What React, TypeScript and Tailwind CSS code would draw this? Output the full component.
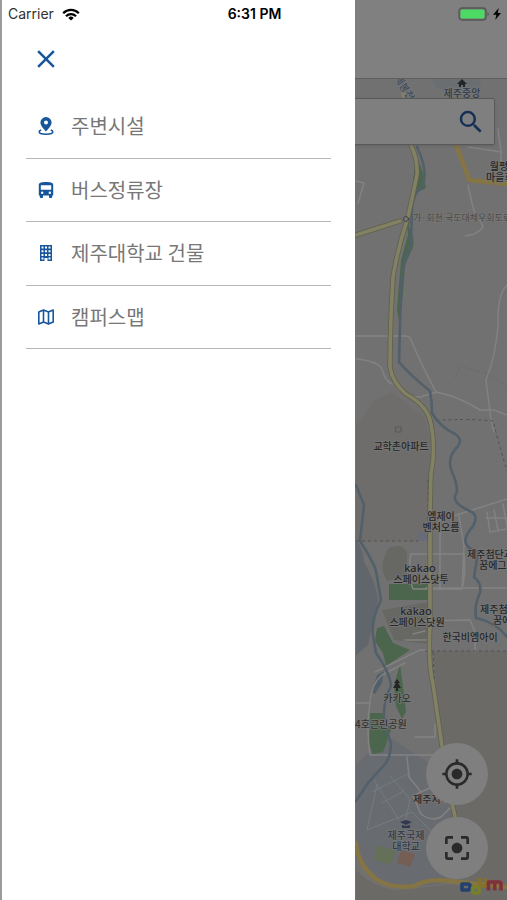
import React from "react";
import { MdSearch, MdClose, MdGpsFixed, MdCenterFocusStrong } from "react-icons/md";

function PlaceIcon() {
  return (
    <svg viewBox="0 0 20 20" className="size-5" fill="none" aria-hidden="true">
      <path
        fillRule="evenodd"
        fill="currentColor"
        d="M10 1a5.600 5.600 0 0 0-5.600 5.600C4.400 10.200 10 15.500 10 15.500s5.600-5.300 5.600-8.900A5.600 5.600 0 0 0 10 1Zm0 3.600a2 2 0 1 1 0 4 2 2 0 0 1 0-4Z"
      />
      <path d="M5.200 14c-1.300.5-2 1.100-2 1.700 0 1.400 3 2.500 6.800 2.500s6.800-1.100 6.800-2.500c0-.6-.7-1.200-2-1.700" stroke="currentColor" strokeWidth="1.600" />
    </svg>
  );
}

function BusIcon() {
  return (
    <svg viewBox="0 0 20 20" className="size-5" fill="currentColor" aria-hidden="true">
      <path
        fillRule="evenodd"
        d="M2.800 5c0-2.200 2.500-3 7.200-3s7.200.8 7.200 3v10.500h-1V17c0 .6-.4 1-1 1h-1.200c-.6 0-1-.4-1-1v-1.500H7V17c0 .6-.4 1-1 1H4.800c-.6 0-1-.4-1-1v-1.500h-1V5Zm2 .3v4.500h10.400V5.300H4.800Zm1.400 6.200a1.200 1.200 0 1 0 0 2.400 1.200 1.200 0 0 0 0-2.400Zm7.600 0a1.200 1.200 0 1 0 0 2.400 1.200 1.200 0 0 0 0-2.400Z"
      />
    </svg>
  );
}

function BuildingIcon() {
  return (
    <svg viewBox="0 0 20 20" className="size-5" fill="currentColor" aria-hidden="true">
      <path
        fillRule="evenodd"
        d="M4 2h12v16h-4.500v-3h-3v3H4V2Zm1.500 1.500v2h2v-2h-2Zm3.500 0v2h2v-2H9Zm3.500 0v2h2v-2h-2Zm-7 3.700v2h2v-2h-2Zm3.500 0v2h2v-2H9Zm3.500 0v2h2v-2h-2Zm-7 3.700v2h2v-2h-2Zm3.500 0v2h2v-2H9Zm3.500 0v2h2v-2h-2Zm-7 3.700v2h2v-2h-2Zm7 0v2h2v-2h-2Z"
      />
    </svg>
  );
}

function CampusMapIcon() {
  return (
    <svg viewBox="0 0 20 20" className="size-5" fill="none" stroke="currentColor" strokeWidth="1.600" strokeLinejoin="round" aria-hidden="true">
      <path d="M2.800 5 7.500 3l5 2 4.700-2v12l-4.700 2-5-2-4.700 2V5ZM7.500 3v12M12.500 5v12" />
    </svg>
  );
}

const menu = [
  { label: "주변시설", Icon: PlaceIcon },
  { label: "버스정류장", Icon: BusIcon },
  { label: "제주대학교 건물", Icon: BuildingIcon },
  { label: "캠퍼스맵", Icon: CampusMapIcon },
];

function StatusBar() {
  return (
    <div className="absolute inset-x-0 top-0 z-30 grid h-7 grid-cols-3 items-center pr-[6px] pl-2 font-[Inter,'Liberation_Sans',sans-serif] text-sm text-[#303030]">
      <div className="flex items-center gap-2">
        <span>Carrier</span>
        <svg viewBox="0 0 18 13" className="h-[13px] w-[18px]" fill="none" stroke="#000" strokeWidth="2.300" aria-hidden="true">
          <path d="M1.200 5.200a11 11 0 0 1 15.600 0M4 8.200a7 7 0 0 1 10 0" />
          <path d="M9 12.500 6.300 9.900a3.900 3.900 0 0 1 5.400 0Z" fill="#000" stroke="none" />
        </svg>
      </div>
      <span className="text-center font-semibold text-black">6:31 PM</span>
      <div className="flex items-center justify-end gap-1">
        <svg viewBox="0 0 31 14" className="h-[14px] w-[31px]" aria-hidden="true">
          <rect x="1" y="1" width="27" height="12" rx="3" fill="#747474" stroke="#555" strokeWidth="1.300" />
          <rect x="2.500" y="2.500" width="24" height="9" rx="1.500" fill="#4cd964" />
          <path d="M29.500 5v4q1.300-.6 1.300-2t-1.300-2Z" fill="#555" />
        </svg>
        <svg viewBox="0 0 8 12" className="h-3 w-2" aria-hidden="true">
          <path d="M5.800 0 0 6.700h3.400L2.200 12 8 5H4.600L5.800 0Z" fill="#000" />
        </svg>
      </div>
    </div>
  );
}

function MapCanvas() {
  return (
    <svg viewBox="0 79 507 821" preserveAspectRatio="xMaxYMin slice" className="absolute inset-0 size-full" fill="none" strokeLinecap="round" strokeLinejoin="round" role="img" aria-label="지도">
      <rect y="79" width="507" height="821" fill="#727171" />
      <path d="M356 425 375 400 392 392 425 418 430 440 429 541H356Z" fill="#6f6d6b" />
      <path d="M433 651h74v249H462L442 745Z" fill="#6b6a66" />
      <path d="M356 870q20 20 45 20l50-6 56 10v6H356Z" fill="#6b6a66" />
      <path d="M356 765l15-15 20-12 45 30 20 60-10 55-40 5-28-5-22-25Z" fill="#686b70" />
      <path d="M356 540q8 10 8 22 12 20 14 38l-10 45-12 10Z" fill="#60666b" />
      <ellipse cx="457" cy="82" rx="24" ry="10" fill="#6a6e71" />

      {/* Parks */}
      <g fill="#4c664d">
        <path d="M410 145q8 12 13 28l3 15-12 6-5 33q6 10 4 20l-8 18-1 15-2 25-3 15-2-10 4-50 7-25-2-20 6-25 3-25Z" />
        <path d="M389 584h40v16h-40Z" />
        <path d="m377 628 7-2 9 17 17 7-24 16-3-13-8-12Z" />
        <path d="m400 664 4 30 2 18-4 7-6-13-2-20Z" />
        <path d="M370 713h12l9 17-8 22-10 2-4-10Z" />
      </g>
      <path d="M389 548q15-6 18 5v23l-20 5q-10-16 2-33ZM382 610l47-8v42l-35-4Z" fill="#676863" />
      <path d="M418 532h12v9h-12Z" fill="#686b78" />
      <path d="m376 845 20 6-5 14-17-6Z" fill="#647057" />
      <path d="m401 850 14 4-5 13-13-4Z" fill="#755f55" />
      <path d="m372 692 5-17 7-4-2 12-7 11Z" fill="#52606b" />

      {/* Minor roads */}
      <g stroke="#828282" strokeWidth="1.500">
        <path d="M356 336h50q4 0 6 6 8 20 24 50 22 4 44 18h14l13 5M410 397h10l17-5M356 359q22 2 26 10 3 12 10 15" />
        <path d="M507 285q-10 10-9 40-2 30-12 55l5 40 3 12M468 185q4 20 7 28 6 8 8 14-6 8-18 9M468 147l33 5M498 129l3 22v17M356 181l8 2-6 20" />
        <path d="m450 517 57-18M487 512l3 20 17-3M494 510l4 20M503 504l4 23M486 518h21M459 516l5 30-2 43M440 516v74M411 554h53q2 20-2 35H413q-6-15-2-35ZM426 588h81M420 621l50-1 5 12v20M405 640h22M413 634l12-3" />
        <path d="m375 672 45-22h10M370 755q-4-25 0-54 2-18 12-26l23-12M370 755h70M407 757l2 20 12 15 20-9M421 792l-8 4 8 18q10 8 20 3l12-12M356 703h14M415 737h20V724" />
        <path d="m367 830 45-18 25 25M374 780l25 40M390 776l20 23-5 25M382 803l22-12M372 792l38-19M367 830l10-45" strokeWidth="0.900" stroke="#777e82" />
      </g>

      {/* District borders */}
      <g stroke="#505050" strokeWidth="1" strokeDasharray="3 3" strokeLinecap="butt">
        <path d="M430 421q35-3 63 0 8 30 14 50M356 541h62M425 651h82M428 480v60M433 652l3 60" />
        <path d="m455 378 5-12 28 8 19 12" stroke="#646464" strokeDasharray="1 2" />
      </g>

      {/* Streams */}
      <g stroke="#52606b" strokeWidth="2.600">
        <path d="M417 147q12 25 5 40-8 5-10 20l-1 38q-8 16-10 42l-2 75q12 14 31 29 2 10 2 22 8 14 23 21 8 5 3 12-12 12-6 26 8 18 3 24-2 8 17 16 8 6-2 18-12 16 8 22-2 14-4 25 8 6 6 16-6 12-4 25 20 4 31 19" />
        <path d="m356 485 8 20-4 36q14 22 16 30l5 29q-10 20-8 35l3 18q14 20 15 33-10 20-6 40l6 17q0 12-5 20l-18 20-12 18" />
      </g>

      {/* Main roads */}
      <g stroke="#5f5f4e" strokeWidth="5.200">
        <path d="M411 145q7 15 6 30l-9 42q-10 30-15 60-3 50-3 90 2 15 16 27 22 12 25 30 5 25 0 50l-1 40v110q-2 40 3 60l9 62q6 40 14 75M356 235l44-14" />
      </g>
      <g stroke="#838164" strokeWidth="3.600">
        <path d="M401 79l3 20M411 145q7 15 6 30l-9 42q-10 30-15 60-3 50-3 90 2 15 16 27 22 12 25 30 5 25 0 50l-1 40v110q-2 40 3 60l9 62q6 40 14 75M356 235l44-14" />
      </g>
      <path d="m456 145 6 15 7 20 38 4M356 843q2 22 20 36 15 10 38 7 15-8 35-5l58 6" stroke="#857444" strokeWidth="4.500" />
      <circle cx="406" cy="219" r="2.500" stroke="#444" strokeWidth="1" fill="#777" />

      {/* Place symbols */}
      <g fill="#242424">
        <path d="m462 79 5 5h-2v3h-2v-2h-2v2h-2v-3h-2Z" />
        <path d="m397 679 3 4h-2l3 5h-3v3h-2v-3h-3l3-5h-2Z" />
        <path d="m406 820 6 2-6 3-6-3ZM402 825l4 1 4-1v3h-8Z" fill="#30394d" />
      </g>
      <path d="M396 427h5v5h-5Z" stroke="#55504a" strokeWidth="0.800" />

      {/* Labels */}
      <g className="font-['Noto_Sans_CJK_KR',sans-serif] text-[10px] font-medium" fill="#262626" stroke="#787878" strokeWidth="1.500" textAnchor="middle" style={{ paintOrder: "stroke" }}>
        <text x="462" y="97" fill="#303948">제주중앙</text>
        <text x="404" y="91" fill="#3d4b5c" transform="rotate(58 404 88)">제봉천</text>
        <text x="499" y="170">월평</text>
        <text x="486" y="181" textAnchor="start">마을회관</text>
        <text x="413" y="221" textAnchor="start" fill="#484848" className="text-[9px] font-normal">가·회천 국도대체우회도로(20)</text>
        <text x="401" y="450">교학촌아파트</text>
        <text x="441" y="520">엠제이</text>
        <text x="441" y="531">벤처오름</text>
        <text x="467" y="558" textAnchor="start">제주첨단과학</text>
        <text x="479" y="569" textAnchor="start">꿈에그린</text>
        <text x="420" y="572" className="font-['Noto_Sans',sans-serif] text-[11px]">kakao</text>
        <text x="421" y="583">스페이스닷투</text>
        <text x="416" y="615" className="font-['Noto_Sans',sans-serif] text-[11px]">kakao</text>
        <text x="417" y="626">스페이스닷원</text>
        <text x="480" y="613" textAnchor="start">제주첨단</text>
        <text x="493" y="624" textAnchor="start">꿈에</text>
        <text x="470" y="641">한국비엠아이</text>
        <text x="397" y="702" fill="#303530">카카오</text>
        <text x="355" y="728" textAnchor="start" fill="#333">4호근린공원</text>
        <text x="413" y="803" textAnchor="start">제주지식</text>
        <text x="406" y="839" fill="#303948">제주국제</text>
        <text x="406" y="850" fill="#303948">대학교</text>
      </g>
    </svg>
  );
}

function DaumLogo() {
  return (
    <svg viewBox="0 0 44 20" className="absolute right-1 bottom-1 h-5 w-11" fill="none" strokeWidth="3.600" strokeLinejoin="round" aria-label="Daum" role="img">
      <path d="M3 8h6q2 0 2 2v2q0 2-2 2H3Z" stroke="#24406f" />
      <path d="M20 9v8h-5q-1.500 0-1.500-2v-2q0-2 1.500-2h4" stroke="#76802b" />
      <path d="M20.500 2v5q0 3 2.500 3h4V2" stroke="#85712a" />
      <path d="M29.500 14.500V6H40q2 0 2 2v6.500M35.700 6v8.500" stroke="#81313a" />
    </svg>
  );
}

function MapButton({ label, children }: { label: string; children: React.ReactNode }) {
  return (
    <button type="button" aria-label={label} className="flex size-[62px] items-center justify-center rounded-full bg-[#7f7f7f] text-[32px] text-[#2a2a2a]">
      {children}
    </button>
  );
}

export default function App() {
  return (
    <div className="relative flex h-screen flex-col overflow-hidden bg-[#808080]">
      <StatusBar />

      <header className="h-[79px] shrink-0 border-b border-[#5e5e5e] bg-[#808080]" />
      <main className="relative min-h-0 flex-1">
        <MapCanvas />
        <form className="absolute inset-x-3 top-[19px] flex h-[47px] items-center rounded-xs border border-[#595959] bg-[#7f7f7f] shadow-sm">
          <input type="search" aria-label="장소 검색" className="h-full min-w-0 flex-1 bg-transparent px-4 outline-none" />
          <button type="button" aria-label="검색" className="mr-2 text-[30px] text-[#152f57]">
            <MdSearch />
          </button>
        </form>
        <DaumLogo />
        <div className="absolute right-[19px] bottom-[21px] flex flex-col gap-3">
          <MapButton label="현재 위치"><MdGpsFixed /></MapButton>
          <MapButton label="화면 맞춤"><MdCenterFocusStrong /></MapButton>
        </div>
      </main>

      <aside className="absolute inset-y-0 left-0 z-20 w-[70%] border-l-2 border-[#9b9b9b] bg-white px-6 pt-[47px]">
        <button type="button" aria-label="메뉴 닫기" className="ml-2 flex size-6 items-center justify-center text-[30px] text-[#17569b]">
          <MdClose className="shrink-0" />
        </button>
        <nav className="mt-6">
          <ul className="grid h-[254px] grid-rows-4">
            {menu.map(({ label, Icon }) => (
              <li key={label} className="border-b border-[#b3b9bb]">
                <a href="#" className="flex h-full items-center gap-[15px] pl-[10px] font-['Noto_Sans_CJK_KR',sans-serif] text-xl text-[#777]">
                  <span className="text-[#17569b]"><Icon /></span>
                  {label}
                </a>
              </li>
            ))}
          </ul>
        </nav>
      </aside>
    </div>
  );
}
